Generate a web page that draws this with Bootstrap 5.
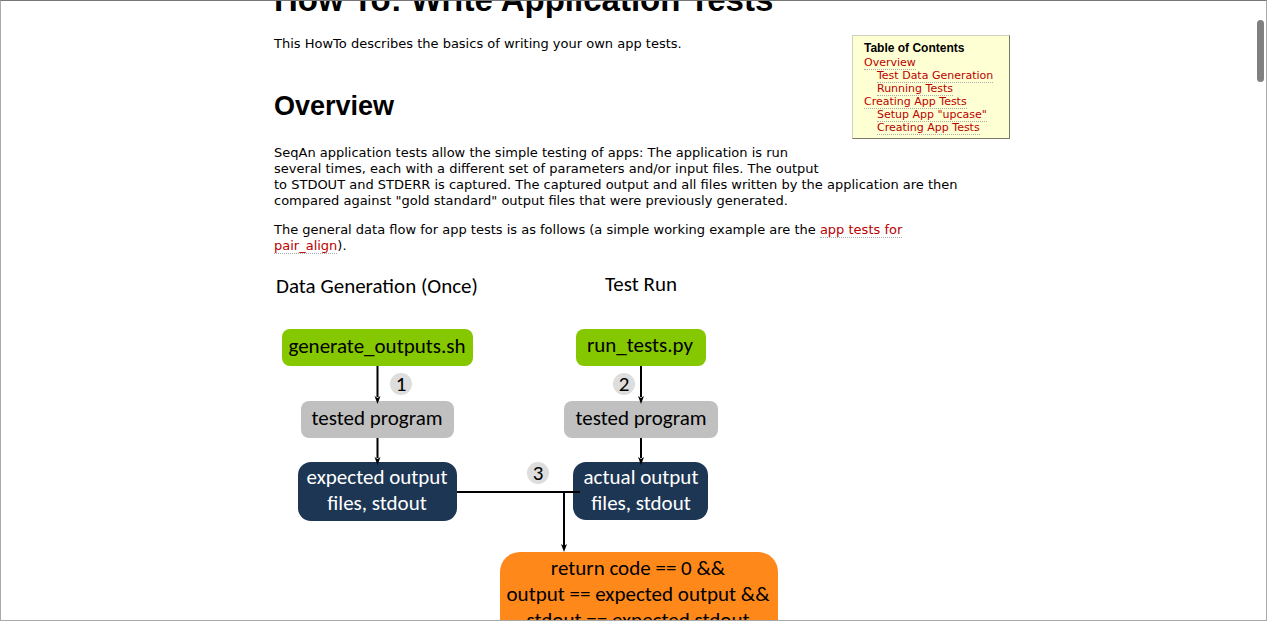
<!DOCTYPE html>
<html lang="en">
<head>
<meta charset="utf-8">
<meta name="viewport" content="width=device-width, initial-scale=1">
<title>How To: Write Application Tests</title>
<link href="https://cdn.jsdelivr.net/npm/bootstrap@5.3.0/dist/css/bootstrap.min.css" rel="stylesheet">
<style>
  body { font: 13px/16px "DejaVu Sans", Verdana, sans-serif; color: #000; }
  .viewer { border: 1px solid #aaa; border-top-color: #777; }
  .wiki-page { max-width: 753px; padding-left: 17px; margin-top: -20px; }
  .wiki-page h1, .wiki-page h2, .toc h4 { font-family: "Liberation Sans", Arial, sans-serif; font-weight: 700; color: #000; }
  .wiki-page h1 { font-size: 33px; line-height: 38px; margin-bottom: 17px; }
  .wiki-page h2 { font-size: 27px; line-height: 32px; margin: 38px 0 23px; }
  .wiki-page p { margin-bottom: 13px; }
  .wiki-page a { color: #b00; text-decoration: none; border-bottom: 1px dotted #aaa; }
  .toc { width: 158px; background: #ffffd4; border: 1px solid; border-color: #d0d0b8 #77776a #77776a #d0d0b8; padding: 5px 11px 4px; margin: -1px 0 0 10px; font-size: 11px; line-height: 13px; white-space: nowrap; }
  .toc h4 { font-size: 12px; line-height: 14px; margin: 0 0 1px; }
  .toc ol ol { padding-left: 13px; }
  .flow { display: block; width: 100%; max-width: 520px; font: 21px Carlito, Calibri, Lato, sans-serif; text-anchor: middle; }
  .scroll-thumb { width: 7px; height: 62px; top: 19px; right: 2px; background: #808080; }
</style>
</head>
<body>
<div class="viewer vh-100 overflow-hidden position-relative">
  <main class="wiki-page mx-auto">
    <h1>How To: Write Application Tests</h1>
    <nav class="toc float-end" aria-label="Table of Contents">
      <h4>Table of Contents</h4>
      <ol class="list-unstyled mb-0">
        <li><a href="#overview">Overview</a>
          <ol class="list-unstyled">
            <li><a href="#data">Test Data Generation</a></li>
            <li><a href="#running">Running Tests</a></li>
          </ol>
        </li>
        <li><a href="#creating">Creating App Tests</a>
          <ol class="list-unstyled">
            <li><a href="#setup">Setup App "upcase"</a></li>
            <li><a href="#tests">Creating App Tests</a></li>
          </ol>
        </li>
      </ol>
    </nav>
    <p>This HowTo describes the basics of writing your own app tests.</p>
    <h2 id="overview">Overview</h2>
    <p>SeqAn application tests allow the simple testing of apps: The application is run<br>several times, each with a different set of parameters and/or input files. The output<br>to STDOUT and STDERR is captured. The captured output and all files written by the application are then compared against "gold standard" output files that were previously generated.</p>
    <p>The general data flow for app tests is as follows (a simple working example are the <a href="#pair">app tests for<br>pair_align</a>).</p>
    <svg class="flow" viewBox="0 0 520 400" role="img" aria-label="Data flow of app tests">
      <g fill="#86c800">
        <rect x="8" y="62" width="191" height="37" rx="8"/>
        <rect x="302" y="62" width="130" height="37" rx="8"/>
      </g>
      <g fill="#c0c0c0">
        <rect x="27" y="134" width="153" height="37" rx="8"/>
        <rect x="290" y="134" width="154" height="37" rx="8"/>
      </g>
      <g fill="#1d3654">
        <rect x="24" y="195" width="159" height="59" rx="13"/>
        <rect x="299" y="195" width="135" height="58" rx="13"/>
      </g>
      <rect x="226" y="285" width="278" height="110" rx="20" fill="#ff881a"/>
      <g fill="#ddd"><circle cx="127" cy="117" r="11"/><circle cx="350" cy="117" r="11"/><circle cx="264" cy="206" r="11"/></g>
      <path stroke="#000" stroke-width="2" fill="none" d="M183 225H306M103.500 99V130M103.500 171V191M367 99V130M367 171V191M290 225V281"/>
      <path d="M100.500 129L103.500 131L106.500 129L103.500 137ZM100.500 190L103.500 192L106.500 190L103.500 198ZM364 129L367 131L370 129L367 137ZM364 190L367 192L370 190L367 198ZM287 277L290 279L293 277L290 285Z"/>
      <text x="103" y="26">Data Generation (Once)</text>
      <text x="367" y="24">Test Run</text>
      <text x="103" y="86">generate_outputs.sh</text>
      <text x="366" y="85">run_tests.py</text>
      <text x="127" y="124">1</text>
      <text x="350" y="124">2</text>
      <text x="264" y="213">3</text>
      <text x="103" y="158">tested program</text>
      <text x="367" y="158">tested program</text>
      <g fill="#fff">
        <text x="103" y="217">expected output</text>
        <text x="103" y="243">files, stdout</text>
        <text x="367" y="217">actual output</text>
        <text x="367" y="243">files, stdout</text>
      </g>
      <text x="364" y="308">return code == 0 &amp;&amp;</text>
      <text x="364" y="334">output == expected output &amp;&amp;</text>
      <text x="364" y="360">stdout == expected stdout</text>
    </svg>
  </main>
  <div class="scroll-thumb position-absolute rounded-pill"></div>
</div>
<script src="https://cdn.jsdelivr.net/npm/bootstrap@5.3.0/dist/js/bootstrap.bundle.min.js"></script>
</body>
</html>
